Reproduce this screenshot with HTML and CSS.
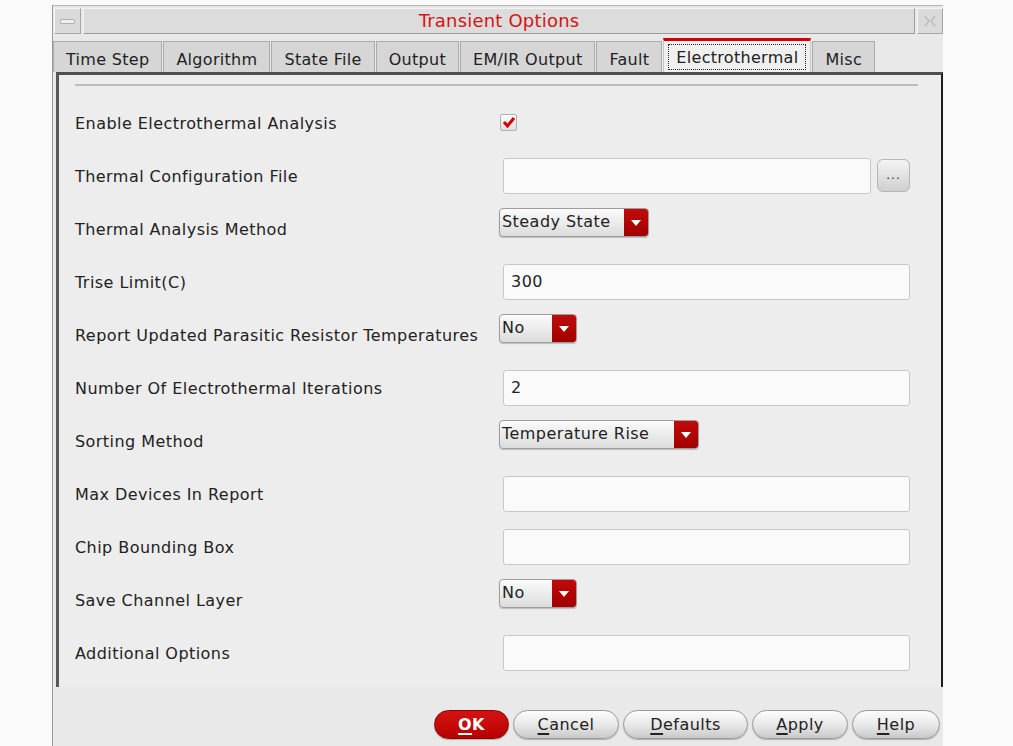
FILE: index.html
```html
<!DOCTYPE html>
<html>
<head>
<meta charset="utf-8">
<title>Transient Options</title>
<link rel="stylesheet" href="styles.css">
</head>
<body>
<div class="dialog">
  <div class="titlebar">
    <div class="tb-btn tb-min"><span class="dash"></span></div>
    <div class="title">Transient Options</div>
    <div class="tb-btn tb-close">
      <svg width="16" height="16" viewBox="0 0 16 16"><path d="M3 3 L7 8 L3 13 M13 3 L9 8 L13 13" fill="none" stroke="#bdbdbd" stroke-width="1.5"/></svg>
    </div>
  </div>
  <div class="tabs">
    <div class="tab">Time Step</div>
    <div class="tab">Algorithm</div>
    <div class="tab">State File</div>
    <div class="tab">Output</div>
    <div class="tab">EM/IR Output</div>
    <div class="tab">Fault</div>
    <div class="tab active"><span class="focus">Electrothermal</span></div>
    <div class="tab">Misc</div>
  </div>
  <div class="panel">
    <div class="sep"></div>
    <div class="form">
      <div class="row"><span class="label">Enable Electrothermal Analysis</span>
        <span class="ctl"><span class="check"><svg width="14" height="12" viewBox="0 0 14 12"><path d="M2 6 L5.5 10 L12 2" fill="none" stroke="#d40000" stroke-width="3"/></svg></span></span></div>
      <div class="row"><span class="label">Thermal Configuration File</span>
        <span class="ctl"><span class="input short"></span><span class="browse">...</span></span></div>
      <div class="row"><span class="label">Thermal Analysis Method</span>
        <span class="ctl"><span class="combo w150"><span class="val">Steady State</span><span class="arrow"></span></span></span></div>
      <div class="row"><span class="label">Trise Limit(C)</span>
        <span class="ctl"><span class="input">300</span></span></div>
      <div class="row"><span class="label">Report Updated Parasitic Resistor Temperatures</span>
        <span class="ctl"><span class="combo w78"><span class="val">No</span><span class="arrow"></span></span></span></div>
      <div class="row"><span class="label">Number Of Electrothermal Iterations</span>
        <span class="ctl"><span class="input">2</span></span></div>
      <div class="row"><span class="label">Sorting Method</span>
        <span class="ctl"><span class="combo w200"><span class="val">Temperature Rise</span><span class="arrow"></span></span></span></div>
      <div class="row"><span class="label">Max Devices In Report</span>
        <span class="ctl"><span class="input"></span></span></div>
      <div class="row"><span class="label">Chip Bounding Box</span>
        <span class="ctl"><span class="input"></span></span></div>
      <div class="row"><span class="label">Save Channel Layer</span>
        <span class="ctl"><span class="combo w78"><span class="val">No</span><span class="arrow"></span></span></span></div>
      <div class="row"><span class="label">Additional Options</span>
        <span class="ctl"><span class="input"></span></span></div>
    </div>
  </div>
  <div class="buttons">
    <span class="btn ok b-ok"><u>O</u>K</span>
    <span class="btn b-cancel"><u>C</u>ancel</span>
    <span class="btn b-defaults"><u>D</u>efaults</span>
    <span class="btn b-apply"><u>A</u>pply</span>
    <span class="btn b-help"><u>H</u>elp</span>
  </div>
</div>
</body>
</html>
```

FILE: styles.css
```css
html, body {
  margin: 0;
  padding: 0;
  background: #fafafa;
  font-family: "DejaVu Sans", "Liberation Sans", sans-serif;
  font-size: 16px;
  letter-spacing: 0.45px;
  color: #222;
}

.dialog {
  margin: 5px 0 0 52px;
  width: 891px;
  height: 741px;
  border-left: 1px solid #9a9a9a;
  border-top: 1px solid #b4b4b4;
  background: #e9e9e9;
  box-sizing: border-box;
}

.titlebar {
  display: flex;
  gap: 2px;
  height: 27px;
  padding: 2px 0 0 1px;
}

.tb-btn {
  width: 27px;
  height: 26px;
  box-sizing: border-box;
  border: 1px solid #a5a5a5;
  border-top-color: #f4f4f4;
  border-left-color: #f4f4f4;
  background: #dadada;
  display: flex;
  align-items: center;
  justify-content: center;
}

.tb-close {
  width: 26px;
}

.dash {
  width: 13px;
  height: 3px;
  background: #f0f0f0;
  border: 1px solid #b0b0b0;
  border-radius: 1px;
}

.title {
  flex: 1;
  height: 26px;
  box-sizing: border-box;
  border: 1px solid #9c9c9c;
  border-top-color: #f2f2f2;
  border-left-color: #f2f2f2;
  background: #dcdcdc;
  color: #d41414;
  font-size: 18px;
  letter-spacing: 0.2px;
  text-align: center;
  line-height: 24px;
}

.tabs {
  display: flex;
  align-items: flex-end;
  gap: 1px;
  height: 37px;
  letter-spacing: 0.3px;
}

.tab {
  height: 31px;
  box-sizing: border-box;
  padding: 0 12px;
  background: #d6d6d6;
  border: 1px solid #ababab;
  border-bottom: none;
  line-height: 35px;
  color: #222;
  white-space: nowrap;
}

.tab.active {
  height: 34px;
  background: #f0f0f0;
  border-top: 3px solid #d40000;
  border-left-color: #c8c8c8;
  border-right-color: #c8c8c8;
  padding: 3px 4px 0;
  line-height: 22px;
}

.focus {
  display: block;
  border: 1px dotted #222;
  padding: 0 7px;
  height: 26px;
  box-sizing: border-box;
  line-height: 25px;
}

.panel {
  margin-left: 3px;
  height: 615px;
  box-sizing: border-box;
  border-top: 3px solid #4f4f4f;
  border-left: 3px solid #585858;
  border-right: 2px solid #1c1c1c;
  background: #ededed;
  padding: 9px 23px 0 16px;
}

.sep {
  height: 2px;
  background: #bdbdbd;
}

.form {
  margin-top: 10px;
  display: flex;
  flex-direction: column;
}

.row {
  display: grid;
  grid-template-columns: 424px 1fr;
  align-items: center;
  height: 53px;
}

.label {
  white-space: nowrap;
  position: relative;
  top: 1px;
}

.ctl {
  display: flex;
  align-items: center;
  gap: 6px;
}

.input {
  margin-left: 4px;
  width: 407px;
  height: 36px;
  box-sizing: border-box;
  border: 1px solid #c8c8c8;
  border-radius: 3px;
  background: #fafafa;
  padding-left: 7px;
  line-height: 34px;
}

.input.short {
  width: 368px;
}

.browse {
  width: 33px;
  height: 33px;
  box-sizing: border-box;
  border: 1px solid #b5b5b5;
  border-radius: 6px;
  background: linear-gradient(#f4f4f4, #cfcfcf);
  font-size: 12px;
  letter-spacing: 1px;
  text-align: center;
  line-height: 30px;
  color: #333;
}

.check {
  margin-left: 1px;
  margin-top: -1px;
  width: 17px;
  height: 17px;
  box-sizing: border-box;
  border: 1px solid #b0b0b0;
  border-radius: 2px;
  background: linear-gradient(#fdfdfd, #dedede);
  display: flex;
  align-items: center;
  justify-content: center;
}

.combo {
  height: 29px;
  box-sizing: border-box;
  border: 1px solid #9d9d9d;
  border-radius: 4px;
  background: linear-gradient(#fbfbfb, #dcdcdc);
  display: flex;
  overflow: hidden;
  margin-top: -12px;
  box-shadow: 0 1px 1px rgba(0,0,0,0.2);
}

.w150 { width: 150px; }
.w78 { width: 78px; }
.w200 { width: 200px; }

.val {
  flex: 1;
  padding-left: 2px;
  line-height: 26px;
  white-space: nowrap;
}

.arrow {
  width: 24px;
  flex: none;
  background: linear-gradient(#c10a0a, #a00000);
  display: flex;
  align-items: center;
  justify-content: center;
}

.arrow::after {
  content: "";
  border-left: 5px solid transparent;
  border-right: 5px solid transparent;
  border-top: 6px solid #fff;
}

.buttons {
  display: flex;
  justify-content: flex-end;
  gap: 4px;
  padding: 23px 3px 0 0;
}

.btn {
  height: 29px;
  box-sizing: border-box;
  border: 1px solid #9a9a9a;
  border-radius: 15px;
  background: linear-gradient(#fdfdfd, #e6e6e6 55%, #c9c9c9);
  line-height: 28px;
  text-align: center;
  box-shadow: 0 1px 1px rgba(0,0,0,0.25);
}

.b-ok { width: 75px; }
.b-cancel { width: 106px; }
.b-defaults { width: 125px; }
.b-apply { width: 96px; }
.b-help { width: 88px; }

.btn u {
  text-decoration-thickness: 2px;
  text-underline-offset: 3px;
}

.ok {
  background: linear-gradient(#d41414, #b80000);
  border-color: #8a0000;
  color: #fff;
  font-weight: bold;
}
```
